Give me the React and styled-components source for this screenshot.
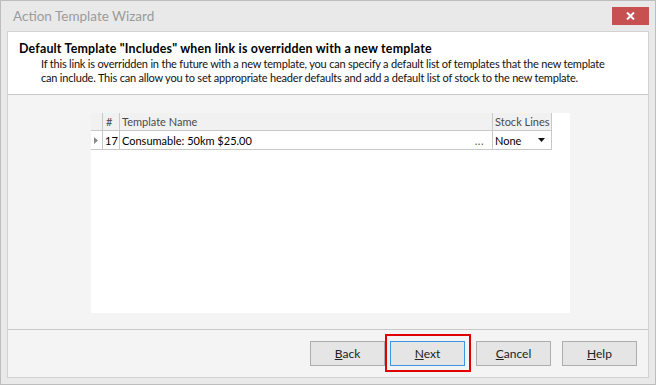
import React from 'react';
import styled, { createGlobalStyle } from 'styled-components';

const GlobalStyle = createGlobalStyle`
    html, body {
        margin: 0;
        padding: 0;
        background: #e9e9e9;
    }
    body {
        font-family: Lato, "Liberation Sans", sans-serif;
        font-size: 11px;
        color: #1a1a1a;
    }
    * {
        box-sizing: border-box;
    }
`;

const Window = styled.div`
    width: 656px;
    height: 385px;
    border: 1px solid #bdbdbd;
    background: #e9e9e9;
    padding: 0 6px 6px;
    display: flex;
    flex-direction: column;
`;

const TitleBar = styled.div`
    height: 30px;
    display: flex;
    align-items: flex-start;
    justify-content: space-between;
`;

const Caption = styled.span`
    font-size: 13.5px;
    line-height: 30px;
    color: #9b9b9b;
    padding-left: 6px;
`;

const CloseButton = styled.button`
    margin-top: 6px;
    width: 37px;
    height: 18px;
    border: none;
    padding: 0;
    background: #c75050;
    display: flex;
    align-items: center;
    justify-content: center;
`;

const Panel = styled.div`
    flex: 1;
    border: 1px solid #d2d2d2;
    background: #f4f4f4;
    display: flex;
    flex-direction: column;
`;

const Header = styled.div`
    height: 63px;
    background: #fff;
    border-bottom: 1px solid #c8c8c8;
    padding: 9px 0 0 11px;
`;

const Heading = styled.div`
    font-size: 12.4px;
    font-weight: bold;
    letter-spacing: 0.2px;
    line-height: 15px;
    color: #000;
`;

const Description = styled.div`
    margin: 1px 0 0 22px;
    font-size: 11px;
    letter-spacing: -0.2px;
    line-height: 14px;
    color: #111;
    white-space: nowrap;
`;

const Body = styled.div`
    flex: 1;
    padding: 18px 0 0 83px;
`;

const GridArea = styled.div`
    width: 479px;
    height: 200px;
    background: #fff;
`;

const Row = styled.div`
    width: 461px;
    height: ${(p) => (p.$head ? 18 : 19)}px;
    display: grid;
    grid-template-columns: 12px 17px 373px 59px;
    border-bottom: 1px solid #c8c8c8;
    background: ${(p) => (p.$head ? '#f1f1f1' : '#fff')};
    color: ${(p) => (p.$head ? '#4a4a4a' : '#000')};
`;

const Cell = styled.div`
    border-right: 1px solid #c8c8c8;
    padding: 0 ${(p) => p.$right || 0}px 0 ${(p) => p.$left ?? 2}px;
    display: flex;
    align-items: center;
    justify-content: ${(p) => (p.$spread ? 'space-between' : 'flex-start')};
    white-space: nowrap;
    overflow: hidden;
`;

const Dots = styled.span`
    color: #555;
    letter-spacing: 0.5px;
`;

const Footer = styled.div`
    height: 48px;
    border-top: 1px solid #c8c8c8;
    padding: 11px 11px 0 0;
    display: flex;
    justify-content: flex-end;
    align-items: flex-start;
    gap: 11px;
`;

const Button = styled.button`
    width: 75px;
    height: 25px;
    margin-right: ${(p) => (p.$tight ? '-6px' : '0')};
    border: 1px solid ${(p) => (p.$focus ? '#3c94e4' : '#adadad')};
    background: #e5e5e5;
    font-family: Lato, "Liberation Sans", sans-serif;
    font-size: 12px;
    color: #222;
    padding: 0;
`;

const Highlight = styled.span`
    position: relative;
    display: flex;

    &::after {
        content: '';
        position: absolute;
        top: -7px;
        left: -5px;
        right: -6px;
        bottom: -6px;
        border: 2px solid #e00000;
        pointer-events: none;
    }
`;

const RowArrow = () => (
    <svg width="4" height="7" viewBox="0 0 4 7">
        <path d="M0 0 L4 3.5 L0 7 Z" fill="#8a8a8a" />
    </svg>
);

const DropArrow = () => (
    <svg width="7" height="4" viewBox="0 0 7 4">
        <path d="M0 0 H7 L3.5 4 Z" fill="#111" />
    </svg>
);

const App = () => {
    return (
        <>
            <GlobalStyle />
            <Window>
                <TitleBar>
                    <Caption>Action Template Wizard</Caption>
                    <CloseButton>
                        <svg width="9" height="8" viewBox="0 0 9 8">
                            <path d="M1 0.5 L8 7.5 M8 0.5 L1 7.5" stroke="#fff" strokeWidth="2" />
                        </svg>
                    </CloseButton>
                </TitleBar>
                <Panel>
                    <Header>
                        <Heading>Default Template "Includes" when link is overridden with a new template</Heading>
                        <Description>
                            If this link is overridden in the future with a new template, you can specify a default list of templates that the new template
                            <br />
                            can include. This can allow you to set appropriate header defaults and add a default list of stock to the new template.
                        </Description>
                    </Header>
                    <Body>
                        <GridArea>
                            <Row $head>
                                <Cell />
                                <Cell $left={3}>#</Cell>
                                <Cell>Template Name</Cell>
                                <Cell>Stock Lines</Cell>
                            </Row>
                            <Row>
                                <Cell $left={3}>
                                    <RowArrow />
                                </Cell>
                                <Cell $left={2}>17</Cell>
                                <Cell $spread $right={8}>
                                    <span>Consumable: 50km $25.00</span>
                                    <Dots>...</Dots>
                                </Cell>
                                <Cell $spread $right={6}>
                                    <span>None</span>
                                    <DropArrow />
                                </Cell>
                            </Row>
                        </GridArea>
                    </Body>
                    <Footer>
                        <Button $tight>
                            <u>B</u>ack
                        </Button>
                        <Highlight>
                            <Button $focus>
                                <u>N</u>ext
                            </Button>
                        </Highlight>
                        <Button>
                            <u>C</u>ancel
                        </Button>
                        <Button>
                            <u>H</u>elp
                        </Button>
                    </Footer>
                </Panel>
            </Window>
        </>
    );
};

export default App;
